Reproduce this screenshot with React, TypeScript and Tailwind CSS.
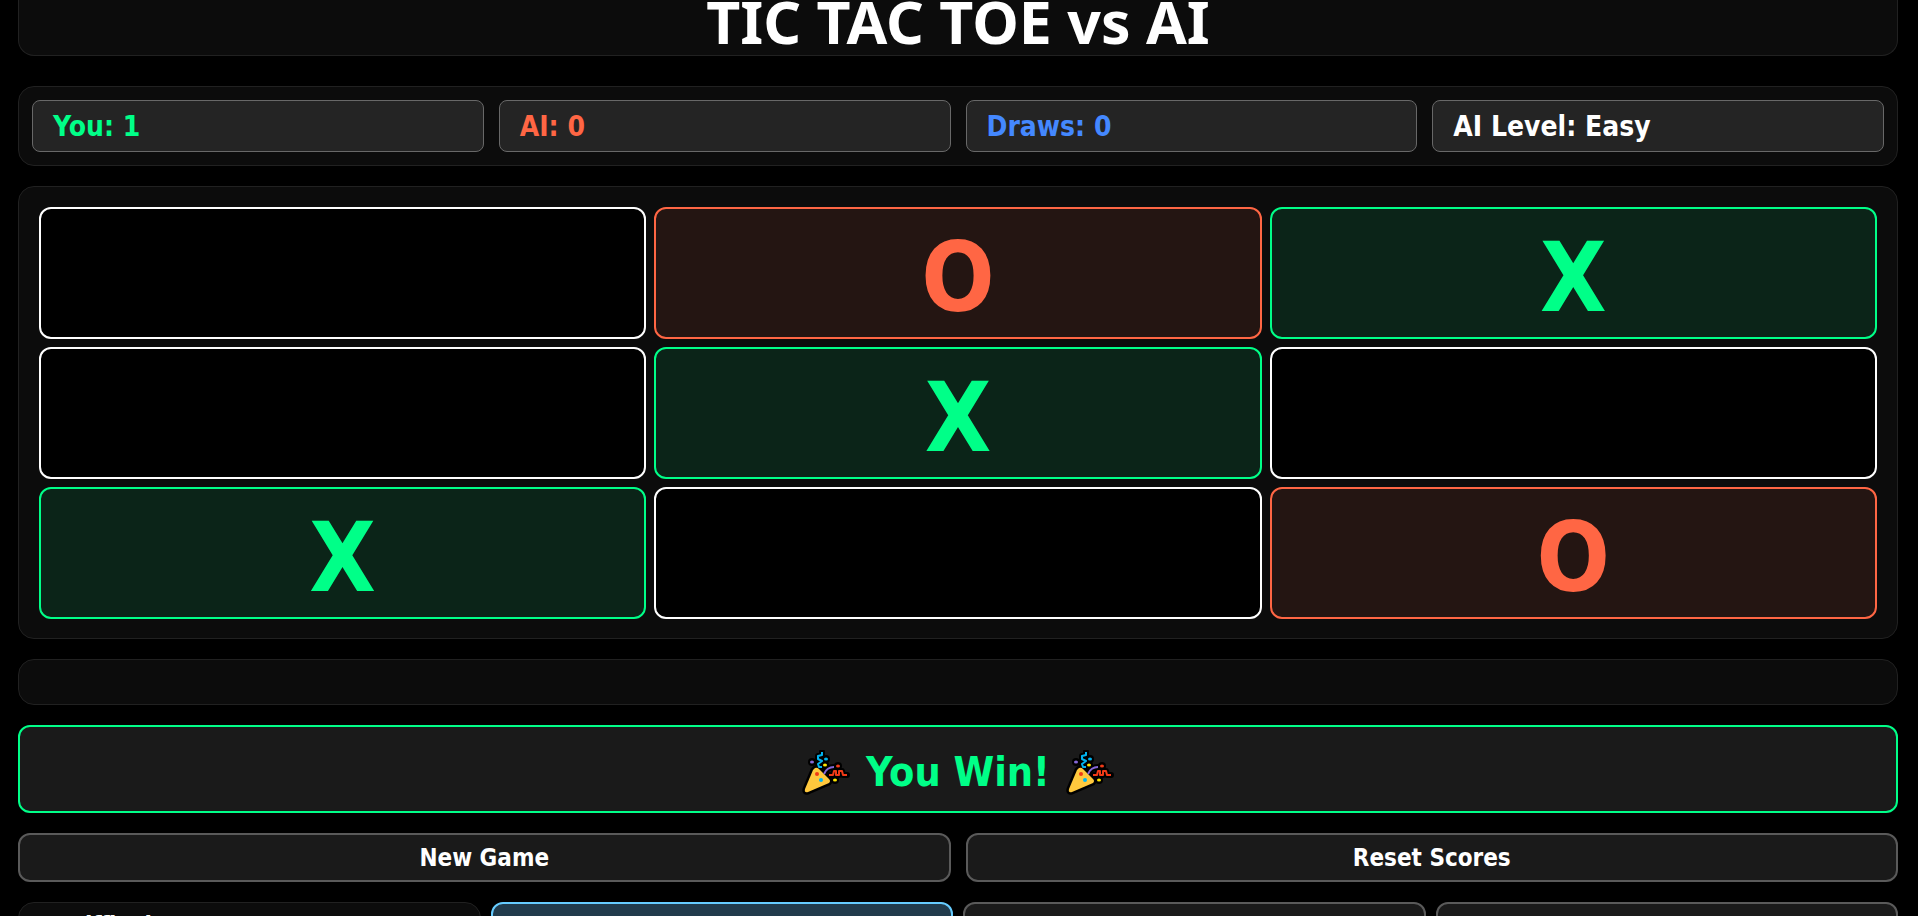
const score = "rounded-lg border border-[#686868] bg-[#242424] px-5 pt-2.5 pb-2 text-[28px] leading-8 font-bold";
const panel = "rounded-2xl border border-[#212121] bg-[#0c0c0c]";
const button = "rounded-xl border-2 border-[#5a5a5a] bg-[#1a1a1a] text-2xl font-bold text-white";

type Mark = "X" | "O" | "";

const board: Mark[] = ["", "O", "X", "", "X", "", "X", "", "O"];

const cellStyle = {
  "": "border-white bg-black",
  X: "border-[#00ff88] bg-[#0b2418] text-[#00ff88]",
  O: "border-[#ff6644] bg-[#241512] text-[#ff6644]",
};

const dots = [
  { x: 10, y: 12, color: "#8467d7" },
  { x: 24, y: 9, color: "#00b4f0" },
  { x: 23, y: 15, color: "#ffe600" },
  { x: 36, y: 16, color: "#f03a17" },
  { x: 33, y: 30, color: "#ffe600" },
];

function Popper() {
  const cone = "M13 18Q15 17 17 19L27 29Q29 31 27 33L6 42Q2 43 3 39L11 20Z";
  const curl = "M20 2v3l-4 1v3l4 2-4 3 1 3h3";
  const ribbon = "M22 24Q25 17 32 17";
  const wave = "M27 25h4l1-4h2v4h3v-4h3l1 4h4";
  return (
    <svg viewBox="0 0 48 46" className="h-[46px] w-12" fill="none" strokeLinejoin="round" aria-hidden="true">
      <g stroke="#000" strokeWidth="6" strokeLinecap="round">
        <path d={cone} strokeWidth="5" />
        <path d={curl} />
        <path d={ribbon} />
        <path d={wave} />
      </g>
      {dots.map((d) => (
        <circle key={`${d.x}-${d.y}`} cx={d.x} cy={d.y} r="4" fill="#000" />
      ))}
      <path d={cone} fill="#ffc83d" />
      <path d={curl} stroke="#00b4f0" strokeWidth="2" />
      <path d={ribbon} stroke="#8467d7" strokeWidth="2" />
      <path d={wave} stroke="#f03a17" strokeWidth="2" />
      {dots.map((d) => (
        <ellipse key={`${d.x}-${d.y}`} cx={d.x} cy={d.y} rx="2" ry="1.5" fill={d.color} />
      ))}
      <circle cx="15" cy="24" r="2" fill="#f03a17" />
      <circle cx="19" cy="30" r="2" fill="#00b4f0" />
    </svg>
  );
}

export default function App() {
  return (
    <div className="h-screen overflow-hidden bg-black font-['DejaVu_Sans_Condensed','DejaVu_Sans',sans-serif] text-white">
      <main className="flex flex-col pr-5 pl-[18px]">
        <header className="mb-[30px] rounded-b-2xl border border-t-0 border-[#212121] bg-[#0c0c0c] pb-1 text-center">
          <h1 className="-mt-2 font-['Noto_Sans',sans-serif] text-[59px] leading-[59px] font-bold">TIC TAC TOE vs AI</h1>
        </header>
        <section className={`${panel} mb-5 grid grid-cols-4 gap-[15px] p-[13px]`} aria-label="Scores">
          <div className={`${score} text-[#00ff88]`}>You: 1</div>
          <div className={`${score} text-[#ff6644]`}>AI: 0</div>
          <div className={`${score} text-[#4488ff]`}>Draws: 0</div>
          <div className={score}>AI Level: Easy</div>
        </section>
        <section className={`${panel} mb-5 grid grid-cols-3 gap-2 px-5 pt-5 pb-[19px]`} aria-label="Board">
          {board.map((mark, i) => (
            <button key={i} aria-label={mark || "Empty cell"} className={`h-[132px] rounded-xl border-2 pt-2.5 text-[96px] leading-none font-bold ${cellStyle[mark]}`}>
              {mark}
            </button>
          ))}
        </section>
        <div className={`${panel} mb-5 h-[46px]`} />
        <section className="mb-5 flex h-[88px] items-center justify-center gap-4 rounded-xl border-2 border-[#00ff88] bg-[#1a1a1a] pt-2 text-[41px] font-bold text-[#00ff88]">
          <Popper />
          <p>You Win!</p>
          <Popper />
        </section>
        <div className="mb-5 grid grid-cols-2 gap-[15px]">
          <button className={`${button} h-[49px]`}>New Game</button>
          <button className={`${button} h-[49px]`}>Reset Scores</button>
        </div>
        <div className="grid grid-cols-4 gap-2.5">
          <div className={`${panel} px-12 py-[7px] text-2xl font-bold`}>Difficulty:</div>
          <button className="rounded-xl border-2 border-[#66ccff] bg-[#213b4c] text-2xl font-bold">Easy</button>
          <button className={`${button} h-[52px]`}>Medium</button>
          <button className={`${button} h-[52px]`}>Hard</button>
        </div>
      </main>
    </div>
  );
}
